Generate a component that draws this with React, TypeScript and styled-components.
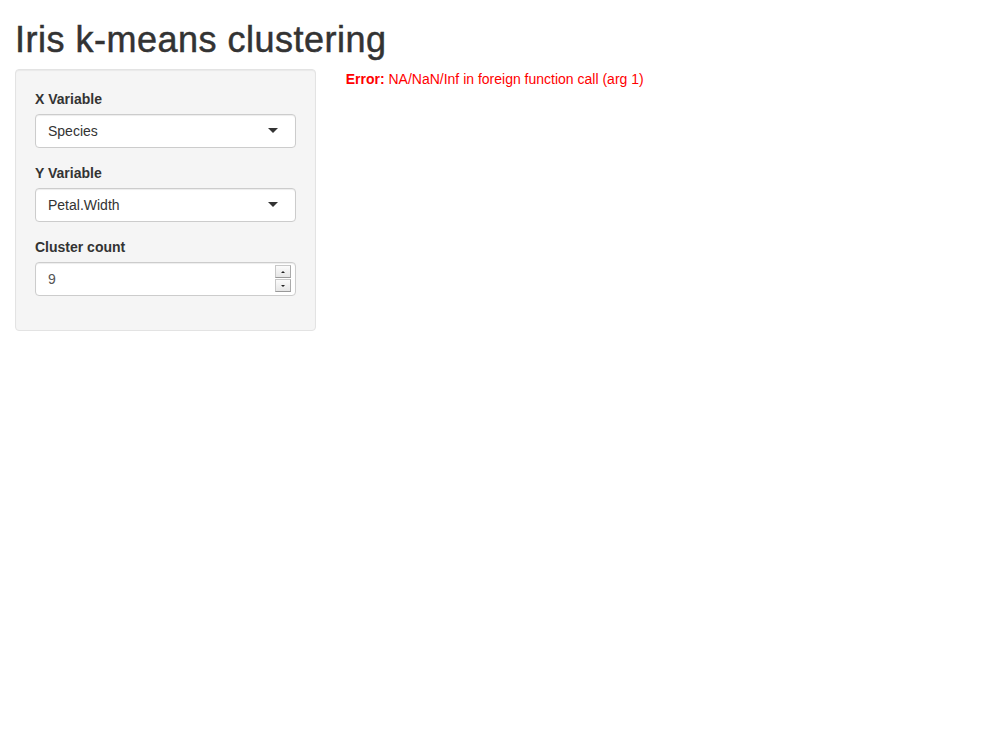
import styled, { createGlobalStyle } from 'styled-components';

const GlobalStyle = createGlobalStyle`
  html, body {
    margin: 0;
    padding: 0;
    background: #fff;
  }
  body {
    font-family: "Liberation Sans", Arial, Helvetica, sans-serif;
    font-size: 14px;
    line-height: 1.42857143;
    color: #333;
  }
  * {
    box-sizing: border-box;
  }
`;

const Page = styled.div`
  padding: 0 15px;
`;

const Title = styled.h1`
  margin: 20px 0 10px;
  font-size: 36px;
  font-weight: 500;
  line-height: 39px;
  letter-spacing: 0.5px;
  color: #333;
  -webkit-text-stroke: 0.5px #333;
`;

const Row = styled.div`
  display: grid;
  grid-template-columns: 1fr 2fr;
  margin: 0 -15px;
`;

const Column = styled.div`
  padding: 0 15px;
  min-width: 0;
`;

const Well = styled.form`
  min-height: 20px;
  padding: 19px;
  margin-bottom: 20px;
  background: #f5f5f5;
  border: 1px solid #e3e3e3;
  border-radius: 4px;
  box-shadow: inset 0 1px 1px rgba(0, 0, 0, 0.05);
`;

const FormGroup = styled.div`
  margin-bottom: 15px;
`;

const Label = styled.label`
  display: block;
  margin-bottom: 5px;
  font-weight: 700;
  max-width: 100%;
`;

const SelectBox = styled.div`
  position: relative;
  height: 34px;
  padding: 6px 12px;
  background: #fff;
  border: 1px solid #ccc;
  border-radius: 4px;
  box-shadow: inset 0 1px 1px rgba(0, 0, 0, 0.075);
  color: #333;
  line-height: 20px;
`;

const Caret = styled.span`
  position: absolute;
  top: 50%;
  right: 17px;
  margin-top: -3px;
  width: 0;
  height: 0;
  border-style: solid;
  border-width: 5px 5px 0 5px;
  border-color: #333 transparent transparent transparent;
`;

const NumberWrap = styled.div`
  position: relative;
`;

const NumberInput = styled.input`
  display: block;
  width: 100%;
  height: 34px;
  padding: 6px 12px;
  font-family: inherit;
  font-size: 14px;
  line-height: 1.42857143;
  color: #555;
  background: #fff;
  border: 1px solid #ccc;
  border-radius: 4px;
  box-shadow: inset 0 1px 1px rgba(0, 0, 0, 0.075);
  -moz-appearance: textfield;
  &::-webkit-inner-spin-button,
  &::-webkit-outer-spin-button {
    -webkit-appearance: none;
    margin: 0;
  }
`;

const Spinner = styled.div`
  position: absolute;
  top: 3px;
  right: 5px;
  width: 16px;
  display: flex;
  flex-direction: column;
  gap: 1px;
`;

const SpinButton = styled.span<{ $down?: boolean }>`
  position: relative;
  height: 13px;
  background: linear-gradient(#fbfbfb, #e6e6e6);
  border: 1px solid #c8c8c8;
  border-right-color: #aaa;
  border-bottom-color: #999;
  &::after {
    content: '';
    position: absolute;
    left: 50%;
    top: 50%;
    margin-left: -2px;
    margin-top: -1px;
    border-style: solid;
    border-width: ${(p) => (p.$down ? '2px 2px 0 2px' : '0 2px 2px 2px')};
    border-color: ${(p) =>
      p.$down ? '#222 transparent transparent transparent' : 'transparent transparent #222 transparent'};
  }
`;

const ErrorText = styled.div`
  color: red;
`;

const App = () => {
  return (
    <>
      <GlobalStyle />
      <Page>
        <Title>Iris k-means clustering</Title>
        <Row>
          <Column>
            <Well>
              <FormGroup>
                <Label>X Variable</Label>
                <SelectBox>
                  Species
                  <Caret />
                </SelectBox>
              </FormGroup>
              <FormGroup>
                <Label>Y Variable</Label>
                <SelectBox>
                  Petal.Width
                  <Caret />
                </SelectBox>
              </FormGroup>
              <FormGroup>
                <Label>Cluster count</Label>
                <NumberWrap>
                  <NumberInput type="number" defaultValue={9} min={1} max={9} />
                  <Spinner>
                    <SpinButton />
                    <SpinButton $down />
                  </Spinner>
                </NumberWrap>
              </FormGroup>
            </Well>
          </Column>
          <Column>
            <ErrorText>
              <b>Error:</b> NA/NaN/Inf in foreign function call (arg 1)
            </ErrorText>
          </Column>
        </Row>
      </Page>
    </>
  );
};

export default App;
